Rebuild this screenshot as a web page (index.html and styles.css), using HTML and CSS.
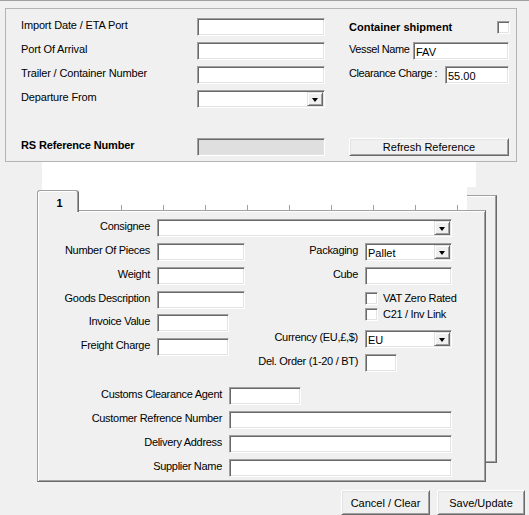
FILE: index.html
```html
<!DOCTYPE html>
<html>
<head>
<meta charset="utf-8">
<link rel="stylesheet" href="styles.css">
</head>
<body>
<div class="window">
  <div class="group">
    <div class="group-grid">
      <div class="lbl">Import Date / ETA Port</div>
      <div class="input w-128"></div>
      <div class="rcell rcell-center"><span class="lbl-bold">Container shipment</span><span class="check"></span></div>

      <div class="lbl">Port Of Arrival</div>
      <div class="input w-128"></div>
      <div class="rcell"><span class="lbl rlbl">Vessel Name</span><div class="input w-96 val">FAV</div></div>

      <div class="lbl">Trailer / Container Number</div>
      <div class="input w-128"></div>
      <div class="rcell"><span class="lbl rlbl">Clearance Charge :</span><div class="input w-64 val">55.00</div></div>

      <div class="lbl">Departure From</div>
      <div class="input combo w-128"><span class="drop"><span class="arrow"></span></span></div>
      <div></div>

      <div></div><div></div><div></div>

      <div class="lbl lbl-bold">RS Reference Number</div>
      <div class="input disabled w-128"></div>
      <div class="rcell"><button class="btn btn-wide">Refresh Reference</button></div>
    </div>
  </div>

  <div class="tabs">
    <div class="back-panel"></div>
    <div class="blank blank-a"></div>
    <div class="blank blank-b">
      <span class="tick" style="left:79px"></span>
      <span class="tick" style="left:121px"></span>
      <span class="tick" style="left:163px"></span>
      <span class="tick" style="left:205px"></span>
      <span class="tick" style="left:247px"></span>
      <span class="tick" style="left:289px"></span>
      <span class="tick" style="left:331px"></span>
      <span class="tick" style="left:373px"></span>
      <span class="tick" style="left:415px"></span>
    </div>
    <div class="tab">1</div>

    <div class="panel">
      <div class="frow">
        <div class="lbl lbl-r w-112">Consignee</div>
        <div class="input combo w-295"><span class="drop"><span class="arrow"></span></span></div>
      </div>

      <div class="mid">
        <div class="mid-col">
          <div class="frow">
            <div class="lbl lbl-r w-112">Number Of Pieces</div>
            <div class="input w-88"></div>
          </div>
          <div class="frow gap6">
            <div class="lbl lbl-r w-112">Weight</div>
            <div class="input w-88"></div>
          </div>
          <div class="frow gap6">
            <div class="lbl lbl-r w-112">Goods Description</div>
            <div class="input w-88"></div>
          </div>
          <div class="frow gap5">
            <div class="lbl lbl-r w-112">Invoice Value</div>
            <div class="input w-72"></div>
          </div>
          <div class="frow gap6">
            <div class="lbl lbl-r w-112">Freight Charge</div>
            <div class="input w-72"></div>
          </div>
        </div>

        <div class="mid-col">
          <div class="frow">
            <div class="lbl lbl-r w-113">Packaging</div>
            <div class="input combo w-87 val">Pallet<span class="drop"><span class="arrow"></span></span></div>
          </div>
          <div class="frow gap6">
            <div class="lbl lbl-r w-113">Cube</div>
            <div class="input w-87"></div>
          </div>
          <div class="frow crow gap7">
            <div class="w-113"></div>
            <span class="check"></span><span class="clbl">VAT Zero Rated</span>
          </div>
          <div class="frow crow gap3">
            <div class="w-113"></div>
            <span class="check"></span><span class="clbl">C21 / Inv Link</span>
          </div>
          <div class="frow gap9">
            <div class="lbl lbl-r w-113">Currency (EU,£,$)</div>
            <div class="input combo w-87 val">EU<span class="drop"><span class="arrow"></span></span></div>
          </div>
          <div class="frow gap6">
            <div class="lbl lbl-r w-113">Del. Order (1-20 / BT)</div>
            <div class="input w-32"></div>
          </div>
        </div>
      </div>

      <div class="bottom">
        <div class="frow">
          <div class="lbl lbl-r w-184">Customs Clearance Agent</div>
          <div class="input w-72"></div>
        </div>
        <div class="frow gap6">
          <div class="lbl lbl-r w-184">Customer Refrence Number</div>
          <div class="input w-223"></div>
        </div>
        <div class="frow gap6">
          <div class="lbl lbl-r w-184">Delivery Address</div>
          <div class="input w-223"></div>
        </div>
        <div class="frow gap6">
          <div class="lbl lbl-r w-184">Supplier Name</div>
          <div class="input w-223"></div>
        </div>
      </div>
    </div>
  </div>

  <div class="actions">
    <button class="btn btn-cancel">Cancel / Clear</button>
    <button class="btn btn-save">Save/Update</button>
  </div>
</div>
</body>
</html>
```

FILE: styles.css
```css
html, body {
  margin: 0;
  padding: 0;
  background: #f0f0f0;
}

body {
  font-family: "Liberation Sans", Arial, sans-serif;
  font-size: 11px;
  color: #000;
  width: 529px;
  height: 515px;
  overflow: hidden;
}

.window {
  border-top: 1px solid #a0a0a0;
  height: 514px;
}

/* ---------- top group box ---------- */
.group {
  margin: 7px 0 0 5px;
  width: 512px;
  height: 154px;
  box-sizing: border-box;
  border: 1px solid #b4b4b4;
  padding: 9px 0 5px 15px;
}

.group-grid {
  display: grid;
  grid-template-columns: 176px 128px 185px;
  grid-template-rows: repeat(6, 18px);
  row-gap: 6px;
}

.lbl {
  line-height: 14px;
  white-space: nowrap;
  align-self: start;
}

.group .lbl {
  letter-spacing: -0.15px;
}

.group .rlbl {
  letter-spacing: -0.4px;
}

.lbl-bold {
  font-weight: bold;
  white-space: nowrap;
}

.lbl-r {
  text-align: right;
}

.rcell {
  display: flex;
  justify-content: space-between;
  align-items: flex-start;
  padding-left: 24px;
  padding-right: 1px;
}

.rcell-center {
  align-items: center;
  padding-right: 0;
}

/* ---------- sunken inputs ---------- */
.input {
  position: relative;
  height: 18px;
  box-sizing: border-box;
  background: #fff;
  border: 1px solid;
  border-color: #a0a0a0 #ffffff #ffffff #a0a0a0;
  box-shadow: inset 1px 1px 0 #696969, inset -1px -1px 0 #e3e3e3;
  flex: none;
}

.val {
  padding-left: 2px;
  padding-top: 2px;
  line-height: 14px;
}

.disabled {
  background: #dfdfdf;
}

.check {
  display: inline-block;
  width: 13px;
  height: 13px;
  box-sizing: border-box;
  background: #fff;
  border: 1px solid;
  border-color: #a0a0a0 #ffffff #ffffff #a0a0a0;
  box-shadow: inset 1px 1px 0 #696969, inset -1px -1px 0 #e3e3e3;
  flex: none;
}

.drop {
  position: absolute;
  right: 1px;
  top: 1px;
  width: 16px;
  height: 14px;
  box-sizing: border-box;
  background: #f0f0f0;
  border: 1px solid;
  border-color: #e3e3e3 #696969 #696969 #e3e3e3;
  box-shadow: inset 1px 1px 0 #ffffff, inset -1px -1px 0 #a0a0a0;
  display: flex;
  align-items: center;
  justify-content: center;
}

.arrow {
  width: 0;
  height: 0;
  border-left: 3.5px solid transparent;
  border-right: 3.5px solid transparent;
  border-top: 4px solid #000;
  margin-top: 1px;
}

/* widths */
.w-32 { width: 32px; }
.w-64 { width: 64px; }
.w-72 { width: 72px; }
.w-87 { width: 87px; }
.w-88 { width: 88px; }
.w-96 { width: 96px; }
.w-112 { width: 112px; flex: none; }
.w-113 { width: 113px; flex: none; }
.w-128 { width: 128px; }
.w-184 { width: 184px; flex: none; }
.w-223 { width: 223px; }
.w-295 { width: 295px; }

/* ---------- buttons ---------- */
.btn {
  font-family: "Liberation Sans", Arial, sans-serif;
  font-size: 11px;
  color: #000;
  background: #f0f0f0;
  border: 1px solid;
  border-color: #ffffff #696969 #696969 #ffffff;
  box-shadow: inset 1px 1px 0 #e3e3e3, inset -1px -1px 0 #a0a0a0;
  padding: 0;
  margin: 0;
  box-sizing: border-box;
}

.btn-wide {
  width: 161px;
  height: 18px;
  line-height: 14px;
}

/* ---------- tab control ---------- */
.tabs {
  position: relative;
  padding: 48px 0 0 37px;
}

.back-panel {
  position: absolute;
  left: 47px;
  top: 33px;
  width: 450px;
  height: 268px;
  box-sizing: border-box;
  background: #f0f0f0;
  border-top: 1px solid #a0a0a0;
  border-left: 1px solid #a0a0a0;
  border-right: 1px solid #696969;
  border-bottom: 1px solid #696969;
  box-shadow: inset -1px -1px 0 #a0a0a0, inset 1px 1px 0 #ffffff;
}

.blank {
  position: absolute;
  background: #ffffff;
}

.blank-a {
  left: 42px;
  top: 0;
  width: 434px;
  height: 25px;
}

.blank-b {
  left: 42px;
  top: 25px;
  width: 425px;
  height: 23px;
}

.tick {
  position: absolute;
  bottom: 0;
  width: 1px;
  height: 5px;
  background: #a0a0a0;
}

.tab {
  position: absolute;
  z-index: 3;
  left: 37px;
  top: 28px;
  width: 42px;
  height: 22px;
  box-sizing: border-box;
  background: #f0f0f0;
  border-left: 1px solid #a0a0a0;
  border-top: 1px solid #a0a0a0;
  border-right: 1px solid #696969;
  border-radius: 3px 3px 0 0;
  box-shadow: inset -1px 0 0 #a0a0a0, inset 1px 1px 0 #ffffff;
  font-weight: bold;
  text-align: center;
  padding: 6px 0 0 3px;
  line-height: 13px;
}

.panel {
  position: relative;
  z-index: 2;
  width: 449px;
  height: 272px;
  box-sizing: border-box;
  background: #f0f0f0;
  border-top: 1px solid #a0a0a0;
  border-left: 1px solid #a0a0a0;
  border-right: 1px solid #696969;
  border-bottom: 1px solid #696969;
  box-shadow: inset 1px 1px 0 #ffffff, inset -1px -1px 0 #a0a0a0;
  padding-top: 8px;
}

.panel .lbl,
.clbl {
  letter-spacing: -0.3px;
}

.frow {
  display: flex;
  column-gap: 7px;
  height: 18px;
}

.crow {
  height: 13px;
  align-items: center;
  column-gap: 0;
}

.crow .w-113 {
  margin-right: 7px;
}

.clbl {
  margin-left: 5px;
  line-height: 13px;
  white-space: nowrap;
}

.gap3 { margin-top: 3px; }
.gap5 { margin-top: 5px; }
.gap6 { margin-top: 6px; }
.gap7 { margin-top: 7px; }
.gap9 { margin-top: 9px; }

.mid {
  display: flex;
  margin-top: 6px;
  height: 129px;
}

.mid-col {
  width: 207px;
  display: flex;
  flex-direction: column;
}

.bottom {
  margin-top: 15px;
  display: flex;
  flex-direction: column;
}

/* ---------- footer buttons ---------- */
.actions {
  display: flex;
  justify-content: flex-end;
  gap: 7px;
  margin-top: 8px;
  padding-right: 4px;
}

.btn-cancel {
  width: 89px;
  height: 25px;
}

.btn-save {
  width: 88px;
  height: 25px;
}
```
